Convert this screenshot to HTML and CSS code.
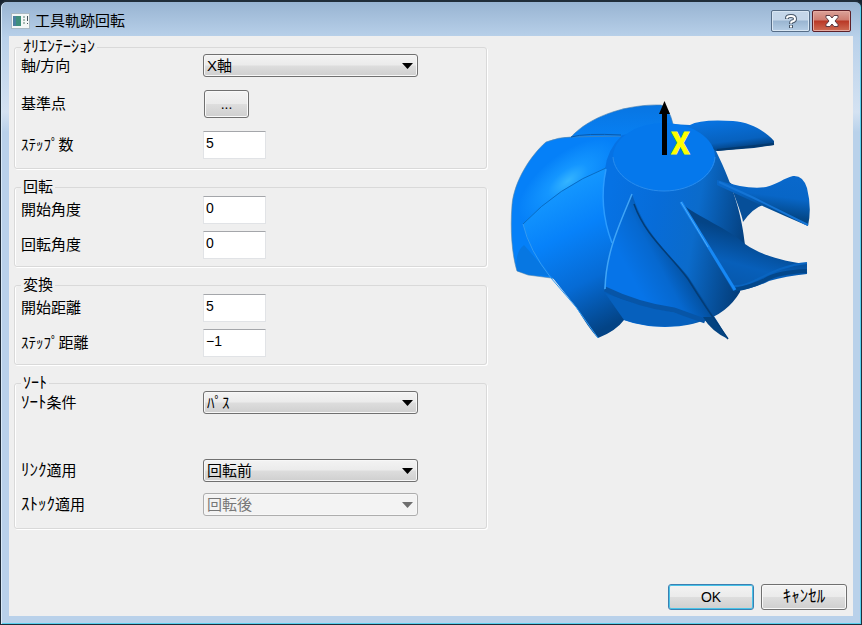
FILE: index.html
```html
<!DOCTYPE html>
<html lang="ja">
<head>
<meta charset="utf-8">
<title>工具軌跡回転</title>
<link rel="stylesheet" href="styles.css">
</head>
<body>
<main class="window">
  <header class="titlebar">
    <svg class="app-icon" width="19" height="16" viewBox="0 0 19 16" aria-hidden="true">
      <rect x=".5" y=".5" width="18" height="15" fill="#f4f7f7" stroke="#aab9c4"/>
      <rect x="2" y="3" width="8" height="10" fill="#3f8f7c"/>
      <rect x="2" y="3" width="3" height="10" fill="#4b7fa0"/>
      <path d="M12 4h2M12 7h2M12 10h2" stroke="#a9bcb5" stroke-width="2"/>
      <path d="M16.500 3v5M16.500 10v1" stroke="#47545c"/>
    </svg>
    <h1 class="title">工具軌跡回転</h1>
    <div class="caption-buttons">
      <button class="caption" type="button" aria-label="ヘルプ">
        <svg width="14" height="16" viewBox="0 0 14 16"><g fill="none"><path d="M3 6V5Q3 3 7 3t4 3Q11 8 8 8.500Q7 9 7 11M7 12v3" stroke="#48586b" stroke-width="4"/><path d="M3 5.500V5Q3 3 7 3t4 3Q11 8 8 8.500Q7 9 7 10.500M7 12.500v2" stroke="#fff" stroke-width="2"/></g></svg>
      </button>
      <button class="caption caption-close" type="button" aria-label="閉じる">
        <svg width="16" height="14" viewBox="0 0 16 14"><path d="M2 1.500h4l2 2.500 2-2.500h4v2L11 7l3 3.500v2h-4L8 10l-2 2.500H2v-2L5 7 2 3.500z" fill="#fff" stroke="#5b3b43"/></svg>
      </button>
    </div>
  </header>
  <form class="client">
    <div class="columns">
      <div class="settings">
        <fieldset class="group">
          <legend class="kana-legend">ｵﾘｴﾝﾃｰｼｮﾝ</legend>
          <div class="rows rows-wide">
            <label for="axis">軸/方向</label>
            <span class="combo"><select id="axis"><option>X軸</option></select></span>
            <label for="base">基準点</label>
            <button class="push browse" id="base" type="button">...</button>
            <label for="steps">ｽﾃｯﾌﾟ数</label>
            <input id="steps" type="text" value="5">
          </div>
        </fieldset>
        <fieldset class="group">
          <legend>回転</legend>
          <div class="rows">
            <label for="start-angle">開始角度</label>
            <input id="start-angle" type="text" value="0">
            <label for="turn-angle">回転角度</label>
            <input id="turn-angle" type="text" value="0">
          </div>
        </fieldset>
        <fieldset class="group">
          <legend>変換</legend>
          <div class="rows">
            <label for="start-distance">開始距離</label>
            <input id="start-distance" type="text" value="5">
            <label for="step-distance">ｽﾃｯﾌﾟ距離</label>
            <input id="step-distance" type="text" value="−1">
          </div>
        </fieldset>
        <fieldset class="group">
          <legend class="kana-legend">ｿｰﾄ</legend>
          <div class="rows rows-sort">
            <label for="sort"><span class="kana">ｿｰﾄ</span>条件</label>
            <span class="combo"><select id="sort"><option>ﾊﾟｽ</option></select></span>
            <label class="second" for="link"><span class="kana">ﾘﾝｸ</span>適用</label>
            <span class="combo second"><select id="link"><option>回転前</option></select></span>
            <label for="stock"><span class="kana">ｽﾄｯｸ</span>適用</label>
            <span class="combo"><select id="stock" disabled><option>回転後</option></select></span>
          </div>
        </fieldset>
      </div>
      <div class="preview">
        <svg width="320" height="250" viewBox="505 95 320 250" role="img" aria-label="X">
          <defs>
            <radialGradient id="shine" gradientUnits="userSpaceOnUse" cx="0" cy="0" r="1" gradientTransform="translate(568 181) rotate(-38) scale(60 27)">
              <stop offset="0" stop-color="#35b5ff"/><stop offset=".4" stop-color="#1496ff"/><stop offset="1" stop-color="#0580f8"/>
            </radialGradient>
            <linearGradient id="back" x1="0" y1="0" x2="0" y2="1"><stop offset="0" stop-color="#0875e2"/><stop offset="1" stop-color="#0788ff"/></linearGradient>
            <linearGradient id="left" gradientUnits="userSpaceOnUse" x1="548" y1="195" x2="612" y2="325">
              <stop offset="0" stop-color="#1497ff"/><stop offset=".3" stop-color="#0782fa"/><stop offset=".65" stop-color="#066bd5"/><stop offset="1" stop-color="#034385"/>
            </linearGradient>
            <linearGradient id="hub" gradientUnits="userSpaceOnUse" x1="605" y1="220" x2="745" y2="245">
              <stop offset="0" stop-color="#0672e4"/><stop offset=".35" stop-color="#076cd8"/><stop offset=".63" stop-color="#0b6bcb"/><stop offset="1" stop-color="#043f7d"/>
            </linearGradient>
            <linearGradient id="front" gradientUnits="userSpaceOnUse" x1="628" y1="270" x2="680" y2="242">
              <stop offset="0" stop-color="#0674e8"/><stop offset=".5" stop-color="#0668cf"/><stop offset="1" stop-color="#03488f"/>
            </linearGradient>
            <linearGradient id="lower" gradientUnits="userSpaceOnUse" x1="750" y1="235" x2="735" y2="290">
              <stop offset="0" stop-color="#044486"/><stop offset=".55" stop-color="#075fba"/><stop offset="1" stop-color="#0757aa"/>
            </linearGradient>
            <linearGradient id="right" gradientUnits="userSpaceOnUse" x1="785" y1="178" x2="780" y2="216">
              <stop offset="0" stop-color="#0968cb"/><stop offset=".5" stop-color="#0866c7"/><stop offset="1" stop-color="#034787"/>
            </linearGradient>
            <linearGradient id="upper" gradientUnits="userSpaceOnUse" x1="728" y1="120" x2="732" y2="150">
              <stop offset="0" stop-color="#0872df"/><stop offset=".7" stop-color="#0761be"/><stop offset="1" stop-color="#033e7a"/>
            </linearGradient>
          </defs>
          <path d="M571 137C590 116 627 104 661 105Q669 107 673 124L645 160H588Z" fill="url(#back)" stroke="#487fae" stroke-width=".6"/>
          <path d="M670 124L690 125Q700 119 733 121C751 122 766 132 774 141V145L754 148 716 151 690 150Z" fill="url(#upper)"/>
          <path d="M717 150L774 144" stroke="#03396f" stroke-width="2"/>
          <path d="M546 142Q559 137 571 137L620 136 640 165 604 292 551 278 528 275 517 271C512 255 510 230 512 205C514 181 531 155 546 142Z" fill="url(#shine)" stroke="#5b88aa" stroke-width=".6"/>
          <path d="M517 271C515 259 518 249 524 245L551 276 530 275Z" fill="#0871d4" opacity=".6"/>
          <path d="M571 137Q585 133 621 135" fill="none" stroke="#075aae" stroke-width="1"/>
          <path d="M622 135Q607 150 605 169Q599 210 611 245L624 320C645 328 677 330 702 321Q727 314 740 292L745 245C742 217 735 190 716 151L680 126Z" fill="url(#hub)"/>
          <ellipse cx="664" cy="157" rx="51" ry="34" fill="#0578ec"/>
          <path d="M613 157C614 174 635 191 664 191S714 174 715 157" fill="none" stroke="#2a8cec" stroke-width="1"/>
          <path d="M523 224Q558 187 606 168C599 200 604 222 612 243L604 289 635 304 624 320Q616 331 598 338C592 332 584 320 576 307L548 272Q531 251 523 224Z" fill="url(#left)"/>
          <path d="M523 224Q558 187 606 168" fill="none" stroke="#086bc3"/>
          <path d="M523 224Q529 250 551 278L576 307 598 338" fill="none" stroke="#359bf1"/>
          <path d="M606 169C600 197 604 222 612 243" fill="none" stroke="#2b9cff" stroke-width="1.500"/>
          <path d="M605 293Q640 306 667 311L702 320Q666 333 624 320Z" fill="#0660bd"/>
          <path d="M632 194C620 222 606 250 605 291Q639 306 668 310L703 319 728 339C717 320 703 299 687 275C666 251 645 233 632 194Z" fill="url(#front)"/>
          <path d="M605 289Q638 305 674 310L705 321" fill="none" stroke="#0755a7" stroke-width="5"/>
          <path d="M632 194C619 226 606 252 605 289" fill="none" stroke="#40a5f7" stroke-width="1.500"/>
          <path d="M634 204C646 237 668 252 688 279Q704 305 728 339" fill="none" stroke="#033c76" stroke-width="1.500"/>
          <path d="M703 317Q711 331 728 339L712 317Z" fill="#034381"/>
          <path d="M729 182Q742 214 743 222Q753 208 763 205Z" fill="#064f99"/>
          <path d="M717 180Q748 190 766 187C778 184 784 178 793 176Q803 175 807 188Q812 208 808 226Q764 207 717 185Z" fill="url(#right)"/>
          <path d="M719 182L754 198 808 225" fill="none" stroke="#1474d5" stroke-width="2"/>
          <path d="M681 203C696 216 731 230 745 244C764 257 788 262 807 264V274Q786 276 769 281 751 290 733 291Z" fill="url(#lower)"/>
          <path d="M734 286C751 288 771 266 807 263" fill="none" stroke="#0964c0" stroke-width="2"/>
          <path d="M734 290Q751 287 765 280Q778 272 807 271" fill="none" stroke="#03478b" stroke-width="4"/>
          <path d="M681 202L735 290" fill="none" stroke="#1688f5" stroke-width="3"/>
          <path d="M681 202L708 247" fill="none" stroke="#4caaf8" stroke-width="1"/>
          <path d="M664.500 111V155" stroke="#000" stroke-width="5"/>
          <path d="M664.500 101L670 114H659Z"/>
          <text class="axis-mark" x="671" y="154">X</text>
        </svg>
      </div>
    </div>
    <footer class="actions">
      <button class="push default" type="submit">OK</button>
      <button class="push kana" type="button">ｷｬﾝｾﾙ</button>
    </footer>
  </form>
</main>
</body>
</html>
```
FILE: styles.css
```css
* { box-sizing: border-box; }

body {
  margin: 0;
  background: #172330;
  color: #000;
  font: 15px/18px "Liberation Sans", "Noto Sans CJK JP", sans-serif;
}

.window {
  display: flex;
  flex-direction: column;
  min-height: 100vh;
  padding: 0 8px 8px;
  border: 1px solid #202d39;
  border-top-width: 2px;
  border-radius: 7px 7px 0 0;
  background: linear-gradient(#98b4d2, #b9d1ea 36px, #d4e2f2 110px, #b9d1ea 130px);
  box-shadow: inset 1px 0 #d9eaf8, inset -1px -1px #58d0ee;
}

.titlebar {
  display: flex;
  align-items: center;
  height: 34px;
  padding: 4px 2px 0;
}

.title {
  flex: 1;
  margin: 0 0 0 5px;
  font-size: 15px;
  font-weight: 400;
}

.caption-buttons { display: flex; gap: 2px; }

.caption {
  display: flex;
  align-items: center;
  justify-content: center;
  width: 39px;
  height: 22px;
  padding: 0;
  border: 1px solid #566d87;
  border-radius: 2px;
  background: linear-gradient(#c4d6e9 45%, #99b5d1 50%, #b5cde5);
  box-shadow: inset 0 0 0 1px #d8e6f3;
}

.caption-close {
  border-color: #5d2028;
  background: linear-gradient(#dba299, #ce7c70 45%, #b93725 50%, #cf6d55);
  box-shadow: inset 0 0 0 1px #e6aaa0;
}

.client {
  display: flex;
  flex: 1;
  flex-direction: column;
  justify-content: space-between;
  padding: 6px;
  background: #efefef;
}

.columns { display: flex; gap: 18px; }

.settings {
  display: flex;
  flex: 0 0 473px;
  flex-direction: column;
  gap: 13px;
  margin-left: -1px;
}

.preview { padding-top: 53px; }

.group {
  min-width: 0;
  margin: 0;
  padding: 0 6px;
  border: 1px solid #d9d9d9;
  border-radius: 3px;
  box-shadow: 1px 1px #fff, inset 1px 0 #fff;
}

legend {
  height: 10px;
  padding: 0 2px;
  line-height: 10px;
}

.rows {
  display: grid;
  grid-template-columns: 182px 1fr;
  align-items: center;
  justify-items: start;
  row-gap: 7px;
  padding: 4px 0 7px;
}

.rows-wide { row-gap: 13px; padding: 2px 0 9px; }
.rows-sort { row-gap: 11px; padding: 3px 0 12px; }
.second { margin-top: 34px; }

.kana-legend { font-size: 16px; }
.kana { font-size: 17px; }

.combo {
  position: relative;
  width: 215px;
}

.combo::after {
  position: absolute;
  top: 9px;
  right: 5px;
  width: 11px;
  height: 6px;
  background: #000;
  clip-path: polygon(0 0, 100% 0, 50% 100%);
  content: "";
  pointer-events: none;
}

.combo:has(select:disabled)::after { background: #6e6e6e; }

select, input, .push {
  color: #000;
  font-family: inherit;
}

select {
  display: block;
  width: 100%;
  height: 23px;
  padding: 0 3px;
  border: 1px solid #707070;
  border-radius: 3px;
  background: linear-gradient(#f3f3f3, #ebebeb 48%, #dddddd 52%, #cfcfcf);
  box-shadow: inset 0 0 0 1px #f7f7f7;
  font-size: 15px;
  line-height: 20px;
  appearance: none;
}

select:disabled {
  border-color: #adadad;
  background: #f3f3f3;
  color: #777;
  opacity: 1;
}

input {
  width: 63px;
  height: 28px;
  padding: 0 2px 5px;
  border: 1px solid #e1e3e6;
  border-top-color: #a4a6aa;
  background: #fff;
  font-size: 14px;
}

.push {
  width: 86px;
  height: 26px;
  padding: 0;
  border: 1px solid #707070;
  border-radius: 3px;
  background: linear-gradient(#f3f3f3, #ebebeb 48%, #dddddd 52%, #cfcfcf);
  box-shadow: inset 0 0 0 1px #f9f9f9;
  font-size: 14px;
  line-height: 18px;
}

.push.kana { font-size: 17px; }

.push.browse {
  width: 45px;
  height: 28px;
  margin-left: 1px;
}

.push.default {
  border-color: #3c7fb1;
  box-shadow: inset 0 0 0 1px #48c3e8;
}

.actions {
  display: flex;
  justify-content: flex-end;
  gap: 7px;
}

.axis-mark {
  fill: #ff0;
  stroke: #ff0;
  font: 700 30px "Noto Sans CJK JP", sans-serif;
}
```
